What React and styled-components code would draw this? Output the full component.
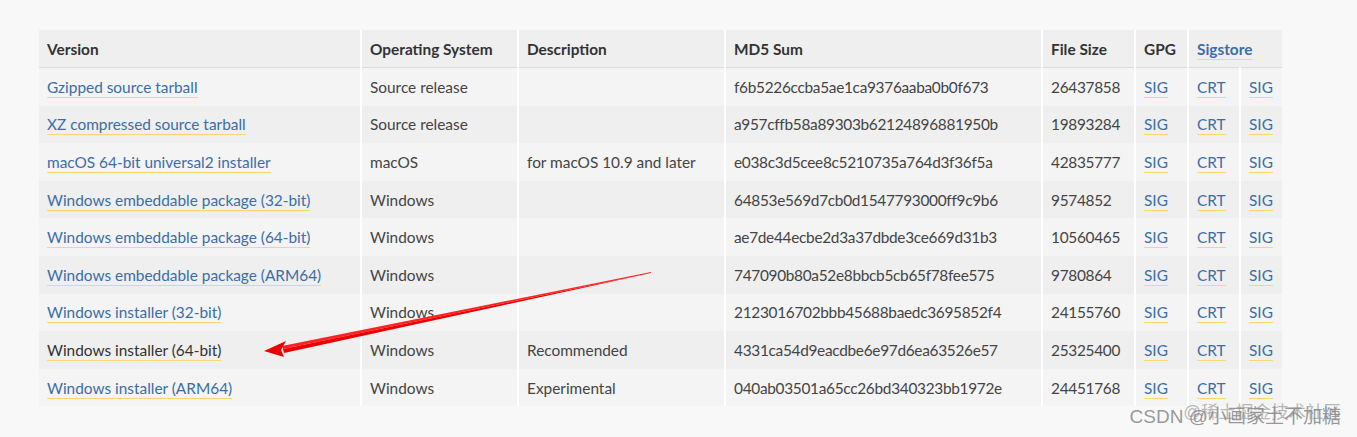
import React from 'react'
import styled, { createGlobalStyle } from 'styled-components'

const GlobalStyle = createGlobalStyle`
  html, body {
    margin: 0;
    padding: 0;
    background: #f8f8f8;
  }
  body {
    font-family: "Lato", "Noto Sans", sans-serif;
  }
`

const files = [
  { name: 'Gzipped source tarball', os: 'Source release', desc: '', md5: 'f6b5226ccba5ae1ca9376aaba0b0f673', size: '26437858' },
  { name: 'XZ compressed source tarball', os: 'Source release', desc: '', md5: 'a957cffb58a89303b62124896881950b', size: '19893284' },
  { name: 'macOS 64-bit universal2 installer', os: 'macOS', desc: 'for macOS 10.9 and later', md5: 'e038c3d5cee8c5210735a764d3f36f5a', size: '42835777' },
  { name: 'Windows embeddable package (32-bit)', os: 'Windows', desc: '', md5: '64853e569d7cb0d1547793000ff9c9b6', size: '9574852' },
  { name: 'Windows embeddable package (64-bit)', os: 'Windows', desc: '', md5: 'ae7de44ecbe2d3a37dbde3ce669d31b3', size: '10560465' },
  { name: 'Windows embeddable package (ARM64)', os: 'Windows', desc: '', md5: '747090b80a52e8bbcb5cb65f78fee575', size: '9780864' },
  { name: 'Windows installer (32-bit)', os: 'Windows', desc: '', md5: '2123016702bbb45688baedc3695852f4', size: '24155760' },
  { name: 'Windows installer (64-bit)', os: 'Windows', desc: 'Recommended', md5: '4331ca54d9eacdbe6e97d6ea63526e57', size: '25325400', visited: true },
  { name: 'Windows installer (ARM64)', os: 'Windows', desc: 'Experimental', md5: '040ab03501a65cc26bd340323bb1972e', size: '24451768' },
]

export default function App() {
  return (
    <Page>
      <GlobalStyle />
      <Table>
        <colgroup>
          <col style={{ width: 322 }} />
          <col style={{ width: 157 }} />
          <col style={{ width: 207 }} />
          <col style={{ width: 317 }} />
          <col style={{ width: 93 }} />
          <col style={{ width: 53 }} />
          <col style={{ width: 52 }} />
          <col style={{ width: 42 }} />
        </colgroup>
        <thead>
          <tr>
            <Th>Version</Th>
            <Th>Operating System</Th>
            <Th>Description</Th>
            <Th>MD5 Sum</Th>
            <Th>File Size</Th>
            <Th>GPG</Th>
            <Th colSpan={2}><Link href="#" $bold>Sigstore</Link></Th>
          </tr>
        </thead>
        <tbody>
          {files.map((f, i) => (
            <Row key={f.name} $odd={i % 2 === 1}>
              <Td><Link href="#" $visited={f.visited}>{f.name}</Link></Td>
              <Td>{f.os}</Td>
              <Td>{f.desc}</Td>
              <Td $hash>{f.md5}</Td>
              <Td $hash>{f.size}</Td>
              <Td><Link href="#">SIG</Link></Td>
              <Td><Link href="#">CRT</Link></Td>
              <Td><Link href="#">SIG</Link></Td>
            </Row>
          ))}
        </tbody>
      </Table>

      {/* red annotation arrow drawn over the table */}
      <Arrow width="1357" height="437" viewBox="0 0 1357 437">
        <polygon points="651,272 282,346 283,349 651,273" fill="#f22" />
        <polygon points="651,273 283,349 284,353" fill="#ee0000" />
        <polygon points="264,351 286,341 281,350 284,357" fill="#ee0000" />
      </Arrow>

      <Watermark>
        <Mark $light>@稀土掘金技术社区</Mark>
        <Mark>CSDN @小画家土不加糖</Mark>
      </Watermark>
    </Page>
  )
}

const Page = styled.div`
  position: relative;
  width: 1357px;
  height: 437px;
  padding: 30px 0 0 39px;
  box-sizing: border-box;
  overflow: hidden;
`

const Table = styled.table`
  border-collapse: collapse;
  table-layout: fixed;
  width: 1243px;
  font-size: 15.4px;
  color: #444;
`

const Th = styled.th`
  height: 37px;
  padding: 0 8px;
  text-align: left;
  font-weight: 700;
  color: #333;
  background: #efefef;
  border-left: 2px solid #fff;
  border-bottom: 1px solid #dcdcdc;
  white-space: nowrap;

  &:first-child {
    border-left: none;
  }
`

const Row = styled.tr`
  background: ${(p) => (p.$odd ? '#efefef' : '#f4f4f4')};
`

const Td = styled.td`
  height: 37.6px;
  padding: 0 8px;
  border-left: 2px solid #fff;
  white-space: nowrap;
  overflow: hidden;
  letter-spacing: ${(p) => (p.$hash ? '-0.3px' : 'normal')};

  &:first-child {
    border-left: none;
  }
`

const Link = styled.a`
  color: ${(p) => (p.$visited ? '#333' : '#3b6ea5')};
  font-weight: ${(p) => (p.$bold ? 700 : 400)};
  text-decoration: none;
  border-bottom: 1px solid #fcd66e;
  padding-bottom: 1px;
`

const Arrow = styled.svg`
  position: absolute;
  left: 0;
  top: 0;
  pointer-events: none;
`

const Watermark = styled.div`
  position: absolute;
  right: 16px;
  bottom: 9px;
  display: grid;
  justify-items: end;
  font-family: "Liberation Sans", "Noto Sans CJK SC", sans-serif;
  line-height: 22px;
`

const Mark = styled.span`
  grid-area: 1 / 1;
  font-size: ${(p) => (p.$light ? '17.5px' : '19px')};
  color: ${(p) => (p.$light ? 'rgba(140,140,140,0.6)' : 'rgba(120,120,120,0.75)')};
  transform: ${(p) => (p.$light ? 'translateY(-5px)' : 'none')};
`
